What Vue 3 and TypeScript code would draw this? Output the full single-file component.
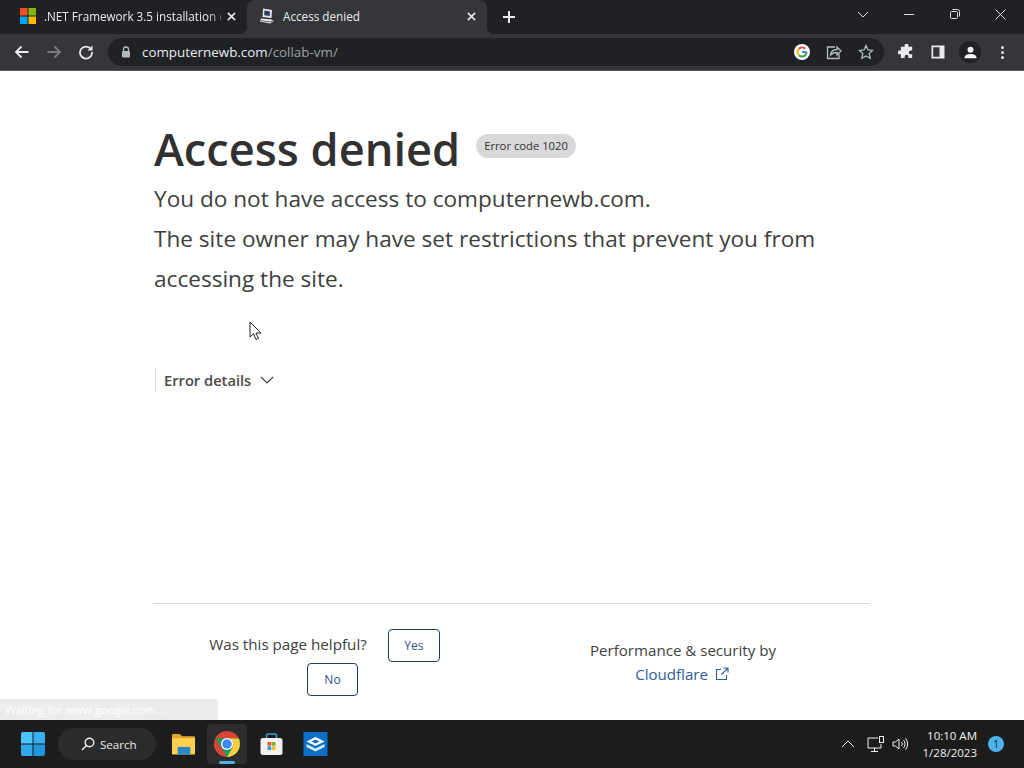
<template>
  <div class="screen">
    <header class="tabstrip">
      <div class="tab tab--inactive">
        <svg class="tab__favicon" viewBox="0 0 16 16">
          <rect x="0" y="0" width="7.5" height="7.5" fill="#f25022" />
          <rect x="8.5" y="0" width="7.5" height="7.5" fill="#7fba00" />
          <rect x="0" y="8.5" width="7.5" height="7.5" fill="#00a4ef" />
          <rect x="8.5" y="8.5" width="7.5" height="7.5" fill="#ffb900" />
        </svg>
        <span class="tab__title tab__title--fade">.NET Framework 3.5 installation e</span>
        <svg class="tab__close" viewBox="0 0 10 10"><path d="M1 1l8 8M9 1l-8 8" /></svg>
      </div>
      <div class="tab tab--active">
        <svg class="tab__favicon" viewBox="0 0 16 16">
          <path d="M4 .5l9 1.500-.5 8-9-1z" fill="#e4e7ee" />
          <path d="M5.500 2.500l5.500 1-.3 4.500-5.500-.8z" fill="#2d3a66" />
          <path d="M2 10.500l10.500 1 2.500 1.500-4 2.500L1 13.500z" fill="#eeeeee" />
          <path d="M2 12.500l9 1.500 3.500-1.500" stroke="#444" stroke-width=".8" fill="none" />
        </svg>
        <span class="tab__title">Access denied</span>
        <svg class="tab__close" viewBox="0 0 10 10"><path d="M1 1l8 8M9 1l-8 8" /></svg>
      </div>
      <svg class="tabstrip__new" viewBox="0 0 12 12"><path d="M6 0v12M0 6h12" /></svg>
      <div class="tabstrip__space"></div>
      <svg class="win-icon win-icon--chevron" viewBox="0 0 12 7"><path d="M1 1l5 5 5-5" /></svg>
      <svg class="win-icon win-icon--min" viewBox="0 0 10 1"><path d="M0 .5h10" /></svg>
      <svg class="win-icon win-icon--max" viewBox="0 0 10 10">
        <rect x=".5" y="2.5" width="7" height="7" rx="1" />
        <path d="M2.500 .5h5a2 2 0 0 1 2 2v5" />
      </svg>
      <svg class="win-icon win-icon--close" viewBox="0 0 11 11"><path d="M.5 .5l10 10M10.500 .5l-10 10" /></svg>
    </header>

    <nav class="toolbar">
      <svg class="nav-btn" viewBox="0 0 16 16"><path d="M14.500 8H2M7.500 2.500L2 8l5.500 5.500" /></svg>
      <svg class="nav-btn nav-btn--off" viewBox="0 0 16 16"><path d="M1.500 8H14M8.500 2.500L14 8l-5.500 5.500" /></svg>
      <svg class="nav-btn" viewBox="0 0 16 16">
        <path d="M13 5.200A6 6 0 1 0 14 8" />
        <path class="nav-btn__fill" d="M14.500 1.500v5h-5z" />
      </svg>
      <div class="omnibox">
        <svg class="omnibox__lock" viewBox="0 0 10 12">
          <path d="M2.500 5V3.500a2.500 2.500 0 0 1 5 0V5" fill="none" stroke="#b5b8bc" stroke-width="1.300" />
          <rect x="1" y="5" width="8" height="6.500" rx="1" fill="#b5b8bc" />
        </svg>
        <span class="omnibox__url">computernewb.com<span class="omnibox__path">/collab-vm/</span></span>
        <svg class="omnibox__google" viewBox="0 0 16 16">
          <circle cx="8" cy="8" r="8" fill="#fff" />
          <path d="M12.500 8H8" stroke="#4285f4" stroke-width="2" fill="none" />
          <path d="M12.500 8a4.500 4.500 0 0 1-7.600 3.300" stroke="#34a853" stroke-width="2" fill="none" />
          <path d="M4.900 11.300a4.500 4.500 0 0 1 0-6.600" stroke="#fbbc05" stroke-width="2" fill="none" />
          <path d="M4.900 4.700a4.500 4.500 0 0 1 6.300 0" stroke="#ea4335" stroke-width="2" fill="none" />
        </svg>
        <svg class="omnibox__icon" viewBox="0 0 16 16">
          <path d="M9 3H1.500v11.500H13V10" />
          <path d="M4.500 11c.5-3.500 3-5.500 6.500-5.500V3l4 4-4 4V8.500c-3 0-5 .8-6.500 2.500z" />
        </svg>
        <svg class="omnibox__icon" viewBox="0 0 16 16">
          <path d="M8 1.500l2 4.400 4.700.5-3.500 3.200 1 4.700L8 11.900l-4.200 2.400 1-4.700L1.300 6.400 6 5.900z" />
        </svg>
      </div>
      <svg class="tool-icon" viewBox="0 0 16 16">
        <path d="M6 1.500a2 2 0 0 1 4 0V3h4v4h-1.500a2 2 0 0 0 0 4H14v4h-4v-1.500a2 2 0 0 0-4 0V15H2v-4H.5a2 2 0 0 1 0-4H2V3h4z" transform="translate(1 0) scale(.94)" />
      </svg>
      <svg class="tool-icon" viewBox="0 0 16 16">
        <path fill-rule="evenodd" d="M1.500 1.500h13v13h-13zM3.200 3.200v9.600H9.500V3.200z" />
      </svg>
      <div class="avatar">
        <svg viewBox="0 0 16 16">
          <circle cx="8" cy="5" r="3.200" />
          <path d="M1.500 14c0-3 2.800-4.400 6.500-4.400s6.500 1.400 6.500 4.400z" />
        </svg>
      </div>
      <div class="kebab"><i></i><i></i><i></i></div>
    </nav>

    <main class="page">
      <div class="content">
        <div class="heading">
          <h1 class="heading__title">Access denied</h1>
          <span class="heading__code">Error code 1020</span>
        </div>
        <p class="lead">You do not have access to computernewb.com.</p>
        <p class="lead">The site owner may have set restrictions that prevent you from accessing the site.</p>
        <div class="details">
          <span>Error details</span>
          <svg viewBox="0 0 14 8"><path d="M1 1l6 6 6-6" /></svg>
        </div>
        <div class="spacer"></div>
        <footer class="foot">
          <div class="foot__feedback">
            <span class="foot__question">Was this page helpful?</span>
            <button class="foot__btn foot__btn--yes" type="button">Yes</button>
            <button class="foot__btn foot__btn--no" type="button">No</button>
          </div>
          <div class="foot__credit">
            <div>Performance &amp; security by</div>
            <div class="foot__link">
              Cloudflare
              <svg viewBox="0 0 14 14">
                <path d="M11.500 8v4.500h-10v-10H6" />
                <path d="M8.500 1H13v4.500M13 1L6.500 7.500" />
              </svg>
            </div>
          </div>
        </footer>
      </div>
      <div class="status">Waiting for www.google.com...</div>
      <svg class="cursor" viewBox="0 0 13 20">
        <path d="M1 1v15l3.500-3.300L7 18.500l2.500-1-2.500-5.500h5z" />
      </svg>
    </main>

    <footer class="taskbar">
      <svg class="taskbar__start" viewBox="0 0 24 24">
        <path d="M2 0h9.500v11.500H0V2a2 2 0 0 1 2-2z" fill="#4cc2ff" />
        <path d="M12.500 0H22a2 2 0 0 1 2 2v9.500H12.500z" fill="#38b0f0" />
        <path d="M0 12.500h11.500V24H2a2 2 0 0 1-2-2z" fill="#30a8ea" />
        <path d="M12.500 12.500H24V22a2 2 0 0 1-2 2h-9.500z" fill="#1f97df" />
      </svg>
      <div class="taskbar__search">
        <svg viewBox="0 0 14 14"><circle cx="8.500" cy="5.500" r="4.300" /><path d="M5.500 8.500L1 13" /></svg>
        <span>Search</span>
      </div>
      <div class="taskbar__app">
        <svg viewBox="0 0 26 24">
          <path d="M1 3a1.500 1.500 0 0 1 1.500-1.500H9L12 4h12a1 1 0 0 1 1 1v3H1z" fill="#e0a72c" />
          <rect x="1" y="6" width="24" height="17" rx="1" fill="#fbd04f" />
          <rect x="7" y="15" width="13" height="8" fill="#2b86c5" />
        </svg>
      </div>
      <div class="taskbar__app taskbar__app--active">
        <svg class="taskbar__chrome" viewBox="0 0 24 24">
          <circle cx="12" cy="12" r="12" fill="#db4437" />
          <path d="M1.600 6.600L7 16l5 8c6.600 0 12-5.400 12-12 0-1.900-.4-3.600-1.200-5.200L12 7z" fill="#0f9d58" />
          <path d="M12 7h10.800A12 12 0 0 1 12 24l5.300-9z" fill="#ffcd40" />
          <circle cx="12" cy="12" r="5.600" fill="#fff" />
          <circle cx="12" cy="12" r="4.400" fill="#4285f4" />
        </svg>
        <i class="taskbar__indicator"></i>
      </div>
      <div class="taskbar__app">
        <svg viewBox="0 0 24 24">
          <path d="M7 7V3.500A1.500 1.500 0 0 1 8.500 2h7A1.500 1.500 0 0 1 17 3.500V7" fill="none" stroke="#37a3d8" stroke-width="1.500" />
          <rect x="1" y="6" width="22" height="17" rx="2.500" fill="#f1f1ef" />
          <rect x="8" y="10" width="3.700" height="3.700" fill="#e8502f" />
          <rect x="12.300" y="10" width="3.700" height="3.700" fill="#7db32a" />
          <rect x="8" y="14.300" width="3.700" height="3.700" fill="#2ba2dc" />
          <rect x="12.300" y="14.300" width="3.700" height="3.700" fill="#f5b81d" />
        </svg>
      </div>
      <div class="taskbar__app">
        <svg viewBox="0 0 24 24">
          <rect width="24" height="24" fill="#0a6fc7" />
          <path d="M12 5l9 4.500-9 4.500-9-4.500z" fill="#fff" />
          <path d="M3 12l9 4.500 9-4.500v3l-9 4.500-9-4.500z" fill="#d6e9f8" />
          <path d="M12 7.500l4 2-4 2-4-2z" fill="#0a6fc7" />
        </svg>
      </div>
      <div class="taskbar__space"></div>
      <svg class="tray tray--chevron" viewBox="0 0 14 8"><path d="M1 7l6-6 6 6" /></svg>
      <svg class="tray tray--net" viewBox="0 0 18 17">
        <path d="M11 2H1v10h13V8M7.500 12v3M4 15.500h7" />
        <rect x="12.500" y=".5" width="4" height="6" />
      </svg>
      <svg class="tray tray--vol" viewBox="0 0 17 14">
        <path d="M1 5v4h2.500L7 12V2L3.500 5zM9.500 5a3 3 0 0 1 0 4M11.500 3a6 6 0 0 1 0 8M13.500 1.200a9 9 0 0 1 0 11.600" />
      </svg>
      <div class="clock">
        <div>10:10 AM</div>
        <div>1/28/2023</div>
      </div>
      <div class="badge">1</div>
    </footer>
  </div>
</template>

<script setup lang="ts">
</script>

<style>
html,
body {
  margin: 0;
  overflow: hidden;
}
</style>

<style scoped>
.screen {
  display: flex;
  flex-direction: column;
  width: 1024px;
  height: 768px;
  overflow: hidden;
  font-family: "Open Sans", "Noto Sans", sans-serif;
  color: #313131;
  background: #fff;
}

/* tabs */
.tabstrip {
  display: flex;
  align-items: center;
  flex: none;
  height: 34px;
  padding-left: 8px;
  background: #202124;
}
.tab {
  position: relative;
  display: flex;
  align-items: center;
  height: 34px;
  padding-bottom: 2px;
  box-sizing: border-box;
  color: #e8eaed;
  font-size: 11.700px;
}
.tab--inactive {
  width: 239px;
  padding-left: 12px;
  padding-right: 11px;
}
.tab--active {
  width: 240px;
  padding-left: 12px;
  padding-right: 11px;
  background: #35363a;
  border-radius: 8px 8px 0 0;
}
.tab--active::before,
.tab--active::after {
  content: "";
  position: absolute;
  bottom: 0;
  width: 8px;
  height: 8px;
}
.tab--active::before {
  left: -8px;
  background: radial-gradient(circle at 0 0, transparent 8px, #35363a 8.500px);
}
.tab--active::after {
  right: -8px;
  background: radial-gradient(circle at 100% 0, transparent 8px, #35363a 8.500px);
}
.tab__favicon {
  flex: none;
  width: 16px;
  height: 16px;
  margin-right: 8px;
}
.tab__title {
  flex: 1;
  min-width: 0;
  white-space: nowrap;
}
.tab__title--fade {
  -webkit-mask-image: linear-gradient(90deg, #000 92%, rgb(0 0 0 / 35%) 100%);
  mask-image: linear-gradient(90deg, #000 92%, rgb(0 0 0 / 35%) 100%);
}
.tab__close {
  flex: none;
  width: 9px;
  height: 9px;
  margin-left: 6px;
  fill: none;
  stroke: #e8eaed;
  stroke-width: 1.700;
}
.tabstrip__new {
  flex: none;
  width: 12px;
  height: 12px;
  margin-left: 16px;
  margin-bottom: 1px;
  fill: none;
  stroke: #e8eaed;
  stroke-width: 2;
}
.tabstrip__space {
  flex: 1;
}
.win-icon {
  flex: none;
  margin-bottom: 6px;
  fill: none;
  stroke: #dcdde0;
  stroke-width: 1;
}
.win-icon--chevron {
  width: 12px;
  height: 7px;
  margin-right: 35px;
  margin-left: -1px;
}
.win-icon--min {
  width: 10px;
  height: 1px;
  margin-right: 36px;
}
.win-icon--max {
  width: 10px;
  height: 10px;
  margin-right: 35px;
}
.win-icon--close {
  width: 11px;
  height: 11px;
  margin-right: 18px;
}

/* address bar */
.toolbar {
  display: flex;
  align-items: center;
  flex: none;
  height: 37px;
  padding-left: 14px;
  box-sizing: border-box;
  background: #35363a;
  border-bottom: 1px solid #55565a;
}
.nav-btn {
  flex: none;
  width: 16px;
  height: 16px;
  margin-right: 16px;
  fill: none;
  stroke: #e8eaed;
  stroke-width: 1.800;
}
.nav-btn--off {
  stroke: #7b7c7f;
}
.nav-btn__fill {
  fill: #e8eaed;
  stroke: none;
}
.omnibox {
  display: flex;
  align-items: center;
  width: 776px;
  height: 28px;
  margin-left: -2px;
  padding: 0 10px 0 13px;
  box-sizing: border-box;
  background: #202124;
  border-radius: 14px;
}
.omnibox__lock {
  flex: none;
  width: 10px;
  height: 12px;
  margin-right: 11px;
}
.omnibox__url {
  flex: 1;
  color: #e8eaed;
  font-size: 13.400px;
}
.omnibox__path {
  color: #9aa0a6;
}
.omnibox__google {
  flex: none;
  width: 16px;
  height: 16px;
  margin-right: 16px;
}
.omnibox__icon {
  flex: none;
  width: 16px;
  height: 16px;
  fill: none;
  stroke: #b9bcc0;
  stroke-width: 1.300;
}
.omnibox__icon + .omnibox__icon {
  margin-left: 16px;
}
.tool-icon {
  flex: none;
  width: 16px;
  height: 16px;
  margin-left: 14px;
  fill: #e8eaed;
}
.tool-icon + .tool-icon {
  margin-left: 16px;
}
.avatar {
  display: flex;
  align-items: center;
  justify-content: center;
  flex: none;
  width: 22px;
  height: 22px;
  margin-left: 13px;
  background: #202124;
  border-radius: 50%;
}
.avatar svg {
  width: 15px;
  height: 15px;
  fill: #f1f3f4;
}
.kebab {
  display: flex;
  flex-direction: column;
  flex: none;
  gap: 2px;
  margin-left: 20px;
}
.kebab i {
  width: 3px;
  height: 3px;
  background: #e8eaed;
  border-radius: 50%;
}

/* page */
.page {
  position: relative;
  flex: 1;
  min-height: 0;
  background: #fff;
}
.content {
  display: flex;
  flex-direction: column;
  box-sizing: border-box;
  width: 716px;
  height: 100%;
  margin-left: 154px;
  padding-top: 48px;
}
.heading {
  display: flex;
  align-items: center;
  height: 60px;
}
.heading__title {
  margin: 0;
  font-size: 45.200px;
  font-weight: 600;
  line-height: 60px;
  color: #313131;
}
.heading__code {
  margin: -6px 0 0 16px;
  padding: 0 8px;
  height: 24px;
  line-height: 24px;
  font-size: 11.250px;
  background: #d9d9d9;
  border-radius: 12px;
}
.lead {
  margin: 0;
  font-size: 22.600px;
  font-weight: 400;
  line-height: 40px;
  color: #404040;
}
.details {
  display: flex;
  align-items: center;
  height: 24px;
  margin-top: 69px;
  margin-left: 1px;
  padding-left: 8px;
  border-left: 1px solid #d9d9d9;
  font-size: 14.700px;
  font-weight: 600;
  color: #4a4a4a;
}
.details svg {
  width: 14px;
  height: 8px;
  margin-left: 9px;
  fill: none;
  stroke: #404040;
  stroke-width: 1.200;
}
.spacer {
  flex: 1;
}
.foot {
  display: flex;
  flex: none;
  height: 117px;
  margin-left: -1px;
  box-sizing: border-box;
  border-top: 1px solid #d9d9d9;
}
.foot__feedback {
  display: flex;
  flex-wrap: wrap;
  align-content: flex-start;
  justify-content: center;
  width: 359px;
  padding: 25px 40px 0;
  box-sizing: border-box;
}
.foot__question {
  margin-right: 21px;
  height: 30px;
  line-height: 30px;
  font-size: 15.200px;
  color: #404040;
}
.foot__btn {
  height: 33px;
  padding: 0;
  background: #fff;
  border: 1px solid #1d3c66;
  border-radius: 4px;
  font-family: inherit;
  font-size: 12px;
  color: #34558f;
}
.foot__btn--yes {
  width: 52px;
  margin-right: 16px;
}
.foot__btn--no {
  width: 51px;
  margin-top: 1px;
}
.foot__credit {
  flex: 1;
  padding: 34px 16px 0 0;
  text-align: center;
  font-size: 15.100px;
  line-height: 24px;
  color: #404040;
}
.foot__link {
  padding-right: 2px;
  color: #2f5d94;
}
.foot__link svg {
  width: 14px;
  height: 14px;
  margin-left: 3px;
  vertical-align: -1px;
  fill: none;
  stroke: #2f5d94;
  stroke-width: 1.100;
}
.status {
  position: absolute;
  left: 0;
  bottom: 0;
  width: 218px;
  height: 21px;
  padding-left: 5px;
  box-sizing: border-box;
  background: #ececec;
  border-top-right-radius: 4px;
  font-size: 11.300px;
  line-height: 21px;
  color: #fff;
  white-space: nowrap;
}
.cursor {
  position: absolute;
  left: 249px;
  top: 250px;
  width: 13px;
  height: 20px;
  fill: #fff;
  stroke: #222;
  stroke-width: 1;
}

/* taskbar */
.taskbar {
  display: flex;
  align-items: center;
  flex: none;
  height: 48px;
  background: #1c1c1c;
}
.taskbar__start {
  flex: none;
  width: 24px;
  height: 24px;
  margin-left: 21px;
}
.taskbar__search {
  display: flex;
  align-items: center;
  flex: none;
  width: 98px;
  height: 32px;
  margin-left: 13px;
  padding-left: 23px;
  box-sizing: border-box;
  background: #2b2b2b;
  border-radius: 16px;
  font-size: 11.600px;
  color: #e6e6e6;
}
.taskbar__search svg {
  width: 14px;
  height: 14px;
  margin-right: 5px;
  fill: none;
  stroke: #f0f0f0;
  stroke-width: 1.400;
}
.taskbar__app {
  position: relative;
  display: flex;
  align-items: center;
  justify-content: center;
  flex: none;
  width: 40px;
  height: 40px;
  margin-left: 4px;
  border-radius: 4px;
}
.taskbar__search + .taskbar__app {
  margin-left: 7px;
}
.taskbar__app svg {
  width: 25px;
  height: 24px;
}
.taskbar__app svg.taskbar__chrome {
  width: 26px;
  height: 26px;
}
.taskbar__app--active {
  background: #2d2d2d;
}
.taskbar__indicator {
  position: absolute;
  left: 12px;
  bottom: 0;
  width: 16px;
  height: 3px;
  background: #4cb2ea;
  border-radius: 2px;
}
.taskbar__space {
  flex: 1;
}
.tray {
  flex: none;
  fill: none;
  stroke: #f0f0f0;
  stroke-width: 1;
}
.tray--chevron {
  width: 14px;
  height: 8px;
}
.tray--net {
  width: 18px;
  height: 17px;
  margin-left: 12px;
}
.tray--vol {
  width: 17px;
  height: 14px;
  margin-left: 7px;
}
.clock {
  flex: none;
  width: 68px;
  text-align: right;
  font-size: 11.500px;
  line-height: 17px;
  color: #f0f0f0;
}
.badge {
  flex: none;
  width: 16px;
  height: 16px;
  margin: 0 20px 0 11px;
  background: #4cb2ea;
  border-radius: 50%;
  font-size: 10px;
  line-height: 16px;
  text-align: center;
  color: #1c1c1c;
}
</style>
